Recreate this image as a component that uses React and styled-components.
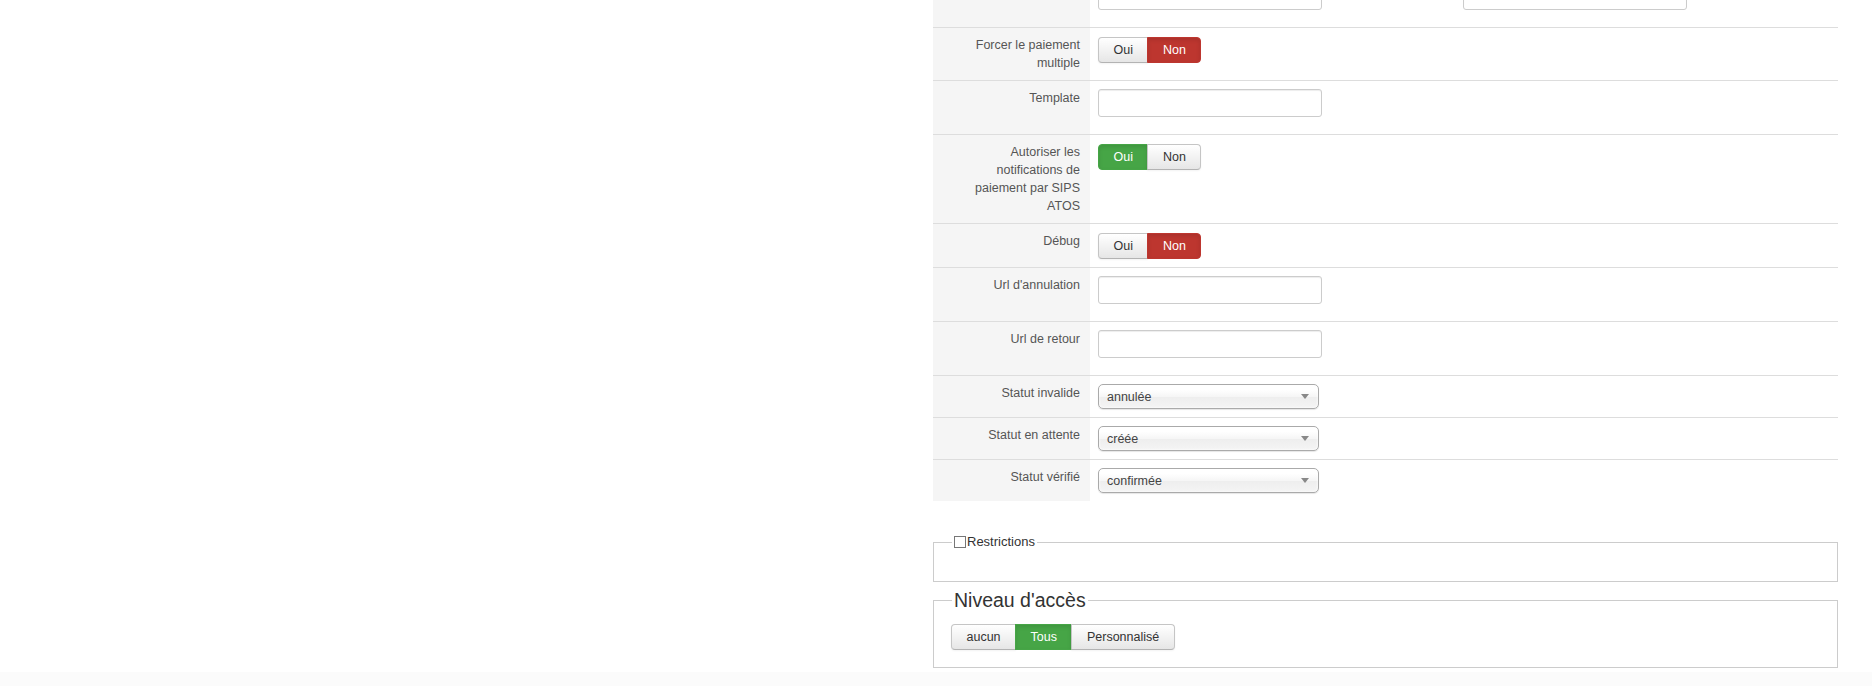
import React from "react";
import styled, { createGlobalStyle } from "styled-components";

const GlobalStyle = createGlobalStyle`
  html, body {
    margin: 0;
    padding: 0;
    background: #fff;
    overflow: hidden;
  }
  body {
    font-family: "Liberation Sans", Arial, sans-serif;
    color: #333;
  }
`;

const rows = [
  { label: "", type: "pair" },
  { label: "Forcer le paiement multiple", type: "toggle", value: "no" },
  { label: "Template", type: "input" },
  {
    label: "Autoriser les notifications de paiement par SIPS ATOS",
    type: "toggle",
    value: "yes"
  },
  { label: "Débug", type: "toggle", value: "no" },
  { label: "Url d'annulation", type: "input" },
  { label: "Url de retour", type: "input" },
  { label: "Statut invalide", type: "select", value: "annulée" },
  { label: "Statut en attente", type: "select", value: "créée" },
  { label: "Statut vérifié", type: "select", value: "confirmée" }
];

const Toggle = ({ value }) => (
  <BtnGroup $top={1}>
    <Btn $active={value === "yes"} $tone="success">
      Oui
    </Btn>
    <Btn $active={value === "no"} $tone="danger">
      Non
    </Btn>
  </BtnGroup>
);

const Field = ({ row }) => {
  if (row.type === "pair") {
    return (
      <Pair>
        <Input />
        <Input />
      </Pair>
    );
  }
  if (row.type === "toggle") return <Toggle value={row.value} />;
  if (row.type === "select") {
    return (
      <Select>
        <span>{row.value}</span>
        <Caret />
      </Select>
    );
  }
  return <Input />;
};

const App = () => {
  return (
    <>
      <GlobalStyle />
      <Page>
        <Side />
        <Main>
          <Table>
            {rows.map((row, i) => (
              <Row key={i}>
                <Label>{row.label}</Label>
                <Value>
                  <Field row={row} />
                </Value>
              </Row>
            ))}
          </Table>

          <Fieldset $pad={30}>
            <Legend>
              <Check />
              Restrictions
            </Legend>
          </Fieldset>

          <Fieldset $pad={17} $gap={6}>
            <BigLegend>Niveau d'accès</BigLegend>
            <BtnGroup $top={12}>
              <Btn>aucun</Btn>
              <Btn $active $tone="success">
                Tous
              </Btn>
              <Btn>Personnalisé</Btn>
            </BtnGroup>
          </Fieldset>
        </Main>
      </Page>
      <Footer />
    </>
  );
};

const Page = styled.div`
  display: flex;
  height: 672px;
  overflow: hidden;
`;

const Side = styled.div`
  width: 933px;
  flex-shrink: 0;
`;

const Main = styled.div`
  width: 905px;
  flex-shrink: 0;
`;

const Table = styled.div`
  margin-top: -27px;
`;

const Row = styled.div`
  display: grid;
  grid-template-columns: 157px 1fr;
  border-top: 1px solid #dddddd;
`;

const Label = styled.div`
  background: #f5f5f5;
  padding: 8px 10px 8px 22px;
  text-align: right;
  font-size: 12.5px;
  line-height: 18px;
  color: #555;
`;

const Value = styled.div`
  padding: 8px;
`;

const Pair = styled.div`
  display: flex;
  gap: 141px;
`;

const Input = styled.div`
  box-sizing: border-box;
  width: 224px;
  height: 28px;
  margin-bottom: 9px;
  background: #fff;
  border: 1px solid #cccccc;
  border-radius: 3px;
  box-shadow: inset 0 1px 1px rgba(0, 0, 0, 0.075);
`;

const Select = styled.div`
  box-sizing: border-box;
  width: 221px;
  height: 25px;
  display: flex;
  align-items: center;
  justify-content: space-between;
  padding: 0 9px 0 8px;
  border: 1px solid #aaaaaa;
  border-radius: 5px;
  background: linear-gradient(#ffffff 20%, #f6f6f6 50%, #eeeeee 52%, #f4f4f4 100%);
  box-shadow: 0 0 3px #fff inset, 0 1px 1px rgba(0, 0, 0, 0.1);
  font-size: 12.5px;
  color: #444;
`;

const Caret = styled.span`
  width: 0;
  height: 0;
  border-left: 4px solid transparent;
  border-right: 4px solid transparent;
  border-top: 5px solid #888;
`;

const BtnGroup = styled.div`
  display: flex;
  margin-top: ${(p) => p.$top}px;
`;

const toneColor = {
  success: "#46a546",
  danger: "#bd362f"
};

const Btn = styled.div`
  box-sizing: border-box;
  height: 26px;
  padding: 0 14.5px;
  display: flex;
  align-items: center;
  font-size: 12.5px;
  border: 1px solid ${(p) => (p.$active ? toneColor[p.$tone] : "#c5c5c5")};
  border-bottom-color: ${(p) => (p.$active ? toneColor[p.$tone] : "#b3b3b3")};
  color: ${(p) => (p.$active ? "#fff" : "#333")};
  background: ${(p) =>
    p.$active ? toneColor[p.$tone] : "linear-gradient(#ffffff, #e6e6e6)"};
  box-shadow: ${(p) =>
    p.$active
      ? "inset 0 2px 4px rgba(0, 0, 0, 0.1)"
      : "inset 0 1px 0 rgba(255, 255, 255, 0.2), 0 1px 2px rgba(0, 0, 0, 0.05)"};

  & + & {
    margin-left: -1px;
  }
  &:first-child {
    border-radius: 4px 0 0 4px;
  }
  &:last-child {
    border-radius: 0 4px 4px 0;
  }
`;

const Fieldset = styled.fieldset`
  margin: ${(p) => p.$gap || 32}px 0 0;
  padding: 0 17px ${(p) => p.$pad}px;
  border: 1px solid #cccccc;
  min-inline-size: 0;
`;

const Legend = styled.legend`
  margin-left: 1px;
  padding: 0 2px;
  display: flex;
  align-items: center;
  font-size: 13px;
  line-height: 18px;
  color: #333;
`;

const Check = styled.span`
  box-sizing: border-box;
  width: 12px;
  height: 12px;
  border: 1px solid #777;
  background: #fff;
  margin-right: 1px;
`;

const BigLegend = styled.legend`
  margin-left: 1px;
  padding: 0 2px;
  font-size: 19.5px;
  line-height: 24px;
  color: #333;
`;

const Footer = styled.div`
  height: 14px;
  background: #fbfbfb;
`;

export default App;
